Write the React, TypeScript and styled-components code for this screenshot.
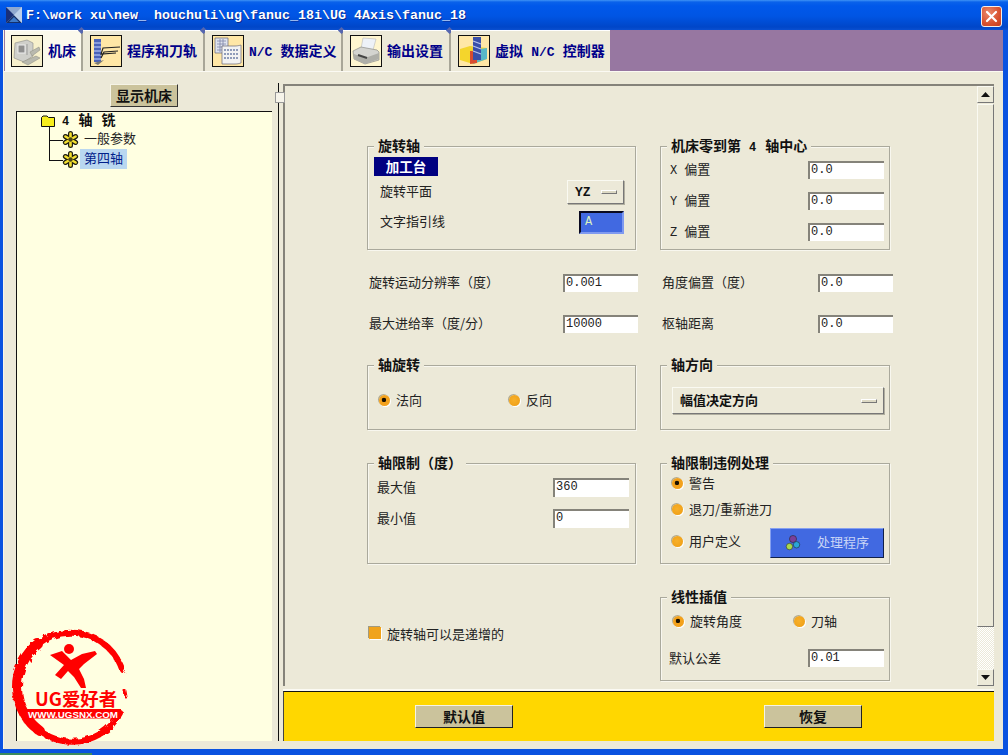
import React from "react";
import styled, { createGlobalStyle } from "styled-components";

const Global = createGlobalStyle`
  html, body { margin: 0; padding: 0; background: #ece9d8; }
  * { box-sizing: border-box; }
  #root { width: 1008px; height: 755px; overflow: hidden; }
`;

const CJK = `"Noto Sans CJK SC", "Liberation Sans", sans-serif`;
const MONO = `"Liberation Mono", "Noto Sans CJK SC", monospace`;

const Win = styled.div`
  position: relative;
  width: 1008px;
  height: 755px;
  display: flex;
  flex-direction: column;
  background: #0a52e0;
  font-family: ${CJK};
  font-size: 13px;
  color: #222;
  overflow: hidden;
`;
const TitleBar = styled.div`
  height: 30px;
  flex: none;
  display: flex;
  align-items: center;
  padding: 0 6px 0 6px;
  background: linear-gradient(#3f93f5 0, #0a62ea 2px, #0058ea 6px, #0055e4 16px, #0046c8 27px, #0a4fd0 30px);
`;
const TitleText = styled.div`
  flex: 1;
  margin-left: 4px;
  color: #fff;
  font: bold 13.33px ${MONO};
  text-shadow: 1px 1px 0 #0a2a90;
  white-space: pre;
`;
const CloseBtn = styled.div`
  width: 21px;
  height: 21px;
  margin-top: 2px;
  border: 1px solid #f5ede8;
  border-radius: 3px;
  background: radial-gradient(circle at 35% 30%, #ea8a6c, #d8512f 60%, #c23c1d);
  display: flex;
  align-items: center;
  justify-content: center;
`;
const Frame = styled.div`
  flex: 1;
  display: flex;
  flex-direction: column;
  margin: 0 5px 0 3px;
  min-height: 0;
  background: #ece9d8;
  border-left: 1px solid #f7f5ea;
`;
const TabStrip = styled.div`
  height: 42px;
  flex: none;
  display: flex;
  background: #9777a1;
  padding-left: 1px;
  border-bottom: 1px solid #fbfaf3;
  position: relative;
`;
const Tab = styled.div<{ $w: number; $active?: boolean; $last?: boolean }>`
  position: relative;
  width: ${(p) => p.$w}px;
  display: flex;
  align-items: center;
  gap: 5px;
  padding-left: ${(p) => (p.$active ? 6 : 7)}px;
  background: ${(p) => (p.$active ? "#fbf9ec" : "#ece9d8")};
  border-top: 1px solid #fff;
  border-right: ${(p) => (p.$last ? "none" : "2px solid #a8a698")};
  font-weight: 700;
  font-size: 14px;
  word-spacing: 5px;
  color: #00008a;
  white-space: pre;
  &::after {
    content: "";
    display: ${(p) => (p.$last ? "none" : "block")};
    position: absolute;
    top: -3px;
    right: -3px;
    width: 5px;
    height: 5px;
    transform: rotate(45deg);
    background: #5566b0;
  }
`;
const TabLabel = styled.span`
  margin-bottom: 2px;
`;
const TabIconBox = styled.div<{ $bg?: string }>`
  width: 32px;
  height: 32px;
  flex: none;
  border: 1px solid #111;
  background: ${(p) => p.$bg || "#ffe7a6"};
`;
const TabMono = styled.span`
  font: bold 13px ${MONO};
`;
const Panes = styled.div`
  flex: 1;
  display: flex;
  min-height: 0;
`;
const LeftPane = styled.div`
  width: 274px;
  flex: none;
  display: flex;
  flex-direction: column;
  align-items: flex-start;
  padding: 12px 0 8px 12px;
`;
const ShowBtn = styled.div`
  width: 68px;
  height: 23px;
  margin-left: 94px;
  background: #cbc39c;
  border: 1px solid;
  border-color: #f5f3e6 #333 #333 #f5f3e6;
  display: flex;
  align-items: center;
  justify-content: center;
  font-weight: 700;
  font-size: 14px;
  color: #111;
`;
const Tree = styled.div`
  margin-top: 4px;
  flex: 1;
  width: 256px;
  background: #ffffe1;
  border-top: 1px solid #111;
  border-left: 1px solid #111;
`;
const TreeRoot = styled.div`
  height: 17px;
  display: flex;
  align-items: center;
  padding-left: 24px;
  gap: 7px;
  font-weight: 700;
  font-size: 14px;
  word-spacing: 6px;
  color: #111;
  white-space: pre;
`;
const TreeRootLabel = styled.span`
  margin-bottom: 3px;
`;
const TreeChild = styled.div<{ $reach: number }>`
  position: relative;
  height: 20px;
  display: flex;
  align-items: center;
  padding-left: 45px;
  &::before {
    content: "";
    position: absolute;
    left: 32px;
    top: ${(p) => 10 - p.$reach}px;
    width: 13px;
    height: ${(p) => p.$reach + 1}px;
    border-left: 1px solid #111;
    border-bottom: 1px solid #111;
  }
`;
const TreeLabel = styled.span<{ $selected?: boolean }>`
  margin-left: 1px;
  padding: 0 4px;
  height: 20px;
  line-height: 18px;
  background: ${(p) => (p.$selected ? "#b9d7f0" : "transparent")};
  color: ${(p) => (p.$selected ? "#00208a" : "#222")};
`;
const Splitter = styled.div`
  position: relative;
  width: 1px;
  flex: none;
  margin: 11px 0 8px;
  background: #111;
  &::after {
    content: "";
    position: absolute;
    left: -3px;
    top: 9px;
    width: 8px;
    height: 9px;
    background: #f6f4ea;
    border: 1px solid #999;
  }
`;
const RightPane = styled.div`
  flex: 1;
  display: flex;
  flex-direction: column;
  padding: 12px 9px 8px 4px;
  min-width: 0;
`;
const FormWrap = styled.div`
  height: 602px;
  flex: none;
  display: flex;
  border-top: 2px solid #85837a;
  border-left: 2px solid #85837a;
`;
const FormBody = styled.div`
  flex: 1;
  padding: 60px 0 0 82px;
  overflow: hidden;
`;
const Row = styled.div<{ $top: number; $cols?: string; $h?: number }>`
  display: grid;
  grid-template-columns: ${(p) => p.$cols || "269px 230px"};
  grid-template-rows: minmax(0, 1fr);
  column-gap: ${(p) => (p.$cols ? 22 : 24)}px;
  margin-top: ${(p) => p.$top}px;
  height: ${(p) => p.$h}px;
`;
const Group = styled.div<{ $pad: string; $gap?: number }>`
  position: relative;
  display: flex;
  flex-direction: column;
  gap: ${(p) => p.$gap || 0}px;
  padding: ${(p) => p.$pad};
  border: 1px solid #aaa99c;
  box-shadow: inset 1px 1px 0 #f8f7ef, 1px 1px 0 #f8f7ef;
`;
const GroupTitle = styled.div`
  position: absolute;
  left: 6px;
  top: -11px;
  height: 18px;
  line-height: 18px;
  padding: 0 4px;
  background: #ece9d8;
  font-weight: 700;
  font-size: 14px;
  color: #111;
  white-space: pre;
`;
const Badge = styled.div`
  width: 64px;
  height: 19px;
  background: #000080;
  color: #fff;
  font-weight: 700;
  font-size: 13.5px;
  line-height: 18px;
  text-align: center;
`;
const Line = styled.div<{ $h: number; $mt?: number; $pl?: number; $ml?: number }>`
  display: flex;
  align-items: center;
  justify-content: space-between;
  height: ${(p) => p.$h}px;
  margin-top: ${(p) => p.$mt || 0}px;
  margin-left: ${(p) => p.$ml || 0}px;
  padding-left: ${(p) => p.$pl || 0}px;
  white-space: pre;
`;
const Label = styled.span<{ $lift?: number }>`
  margin-bottom: ${(p) => p.$lift ?? 2}px;
  white-space: pre;
`;
const Mono = styled.span<{ $l?: number; $r?: number }>`
  font-family: ${MONO};
  font-size: 12px;
  margin-left: ${(p) => p.$l || 0}px;
  margin-right: ${(p) => p.$r || 0}px;
`;
const Input = styled.div<{ $w?: number; $h?: number }>`
  width: ${(p) => p.$w || 76}px;
  height: ${(p) => p.$h || 18}px;
  flex: none;
  background: #fff;
  border-top: 2px solid #85837a;
  border-left: 2px solid #85837a;
  padding-left: 1px;
  font: 12px/15px ${MONO};
  color: #222;
`;
const BlueInput = styled.div`
  width: 45px;
  height: 23px;
  background: #4169e1;
  border: 2px solid;
  border-color: #0a0a20 #7f9af0 #7f9af0 #0a0a20;
  padding-left: 4px;
  color: #d8f0c0;
  font: 12px/19px ${MONO};
`;
const OptionBtn = styled.div`
  width: 57px;
  height: 24px;
  background: #ece9d8;
  border: 1px solid;
  border-color: #fafaf2 #777 #777 #fafaf2;
  box-shadow: 1px 1px 0 #b0ae9f;
  display: flex;
  align-items: center;
  justify-content: space-between;
  padding: 0 6px 0 7px;
  font: bold 13px ${MONO};
  color: #111;
`;
const Dash = styled.span`
  width: 16px;
  height: 4px;
  background: #ddd9c4;
  border: 1px solid;
  border-color: #fff #777 #777 #fff;
`;
const Dropdown = styled(OptionBtn)`
  width: 212px;
  height: 27px;
  padding: 0 6px 0 7px;
  font: bold 13px ${CJK};
`;
const Radios = styled.div<{ $cols: string; $pt?: number }>`
  display: grid;
  grid-template-columns: ${(p) => p.$cols};
  align-items: center;
  height: 18px;
  margin-top: ${(p) => p.$pt || 0}px;
`;
const RadioOpt = styled.div<{ $mb?: number }>`
  display: flex;
  align-items: center;
  gap: 6px;
  margin-bottom: ${(p) => p.$mb || 0}px;
  white-space: pre;
`;
const RadioDot = styled.span<{ $on?: boolean }>`
  width: 11px;
  height: 11px;
  flex: none;
  border-radius: 50%;
  background: radial-gradient(circle at 45% 45%, ${(p) => (p.$on ? "#1a1000 0, #1a1000 22%, #f3a11b 30%, #f3a11b 100%" : "#f7b02a, #ee9c12")});
  box-shadow: -1px -1px 0 #b4ac90, 1px 1px 0 #fff;
`;
const BlueBtn = styled.div`
  width: 114px;
  height: 30px;
  background: #4169e1;
  border: 1px solid;
  border-color: #86a0f0 #10204a #10204a #86a0f0;
  display: flex;
  align-items: center;
  gap: 16px;
  padding-left: 14px;
  color: #c8d4f6;
  font-size: 13px;
`;
const FieldSide = styled.div`
  display: flex;
  align-items: center;
  justify-content: space-between;
  padding-left: 2px;
  white-space: pre;
`;
const CheckRow = styled.div`
  display: flex;
  align-items: center;
  gap: 6px;
  height: 14px;
  margin: 29px 0 0 2px;
`;
const CheckBox = styled.span`
  width: 12px;
  height: 12px;
  background: #f0a31c;
  box-shadow: -1px -1px 0 #a09a80, 1px 1px 0 #fff;
`;
const ScrollBar = styled.div`
  width: 17px;
  flex: none;
  display: flex;
  flex-direction: column;
`;
const ScrollBtn = styled.div`
  height: 17px;
  flex: none;
  background: #ece9d8;
  border: 1px solid;
  border-color: #fafaf2 #777 #777 #fafaf2;
  display: flex;
  align-items: center;
  justify-content: center;
`;
const Thumb = styled.div`
  height: 523px;
  flex: none;
  margin-top: 1px;
  background: #ece9d8;
  border: 1px solid;
  border-color: #fafaf2 #777 #777 #fafaf2;
`;
const Track = styled.div`
  flex: 1;
  background: repeating-conic-gradient(#ece9d8 0 25%, #fff 0 50%) 0 0 / 2px 2px;
`;
const ActionBar = styled.div`
  margin-top: 5px;
  flex: 1;
  background: #ffd700;
  border-top: 1px solid #111;
  border-left: 1px solid #444;
  box-shadow: 0 -2px 0 #fbfaf3;
  display: flex;
  justify-content: space-between;
  padding: 13px 132px 0 131px;
`;
const ActionBtn = styled.div`
  width: 98px;
  height: 23px;
  background: #cbc39c;
  border: 1px solid;
  border-color: #f5f3e6 #222 #222 #f5f3e6;
  display: flex;
  align-items: center;
  justify-content: center;
  font-weight: 700;
  font-size: 14px;
  color: #111;
`;
const BottomEdge = styled.div`
  height: 6px;
  flex: none;
`;
const TaskStrip = styled.div`
  position: absolute;
  left: 0;
  bottom: 0;
  width: 92px;
  height: 2px;
  background: #3b8a5e;
`;
const Logo = styled.svg`
  position: absolute;
  left: 12px;
  top: 627px;
`;

const Gear = () => (
  <svg width="17" height="17" viewBox="0 0 17 17" style={{ flex: "none" }}>
    <g stroke="#1d1d10" strokeWidth="5" strokeLinecap="round">
      <path d="M8.5 2.6v11.8M3.4 5.5l10.2 6M13.6 5.5l-10.2 6" />
    </g>
    <g stroke="#f4e030" strokeWidth="2.6" strokeLinecap="round">
      <path d="M8.5 2.6v11.8M3.4 5.5l10.2 6M13.6 5.5l-10.2 6" />
    </g>
    <circle cx="8.5" cy="8.5" r="2.2" fill="#4a4614" />
  </svg>
);
const Folder = () => (
  <svg width="14" height="12" viewBox="0 0 14 12" style={{ flex: "none" }}>
    <path d="M.5 2.5 2 1h4l1.5 1.5h6v9H.5z" fill="#f7ee1c" stroke="#111" />
  </svg>
);
const WinIcon = () => (
  <svg width="16" height="16" viewBox="0 0 16 16" style={{ flex: "none" }}>
    <rect width="16" height="16" fill="#9fb4d8" />
    <path d="M0 0h16L8 8z" fill="#8fa8d0" />
    <path d="M0 0l8 8-8 8z" fill="#1a2f78" />
    <path d="M0 16h16L8 8z" fill="#16306a" />
    <path d="M16 0 8 8l8 8z" fill="#bcd0ea" />
    <path d="M3 15 8 10l5 5z" fill="#3d79c8" />
  </svg>
);
const Tri = ({ down }: { down?: boolean }) => (
  <svg width="9" height="5" viewBox="0 0 9 5">
    <path d={down ? "M0 0h9L4.5 5z" : "M0 5h9L4.5 0z"} fill="#111" />
  </svg>
);
const MachineIcon = () => (
  <svg width="30" height="30" viewBox="0 0 30 30" style={{ display: "block" }}>
    <rect width="30" height="30" fill="#f7f0cc" />
    <path d="M2 22 3 7l12-3 6 3v13l-9 6z" fill="#cfcfca" stroke="#8a8a86" strokeWidth=".6" />
    <rect x="6" y="9" width="7" height="8" fill="#8f8f8f" stroke="#eee" />
    <path d="M15 8v11" stroke="#999" />
    <path d="M18 16l9-5 1 3-8 6zM10 26l14-6 4 2-12 7z" fill="#b9b9ae" stroke="#8a8a7e" strokeWidth=".5" />
  </svg>
);
const PathIcon = () => (
  <svg width="30" height="30" viewBox="0 0 30 30" style={{ display: "block" }}>
    <rect x="3" y="3" width="7" height="23" fill="#4a62b8" />
    <path d="M3 7h7M3 11h7M3 15h7M3 19h7M3 23h7" stroke="#9fb0e8" strokeWidth="1.4" />
    <path d="M29 11 12 12l-2 6 15-1M27 15l-14 1-3 6" fill="none" stroke="#222" strokeWidth="1.2" />
    <path d="M3 27l10-3-6 5z" fill="#777" />
  </svg>
);
const SheetIcon = () => (
  <svg width="30" height="30" viewBox="0 0 30 30" style={{ display: "block" }}>
    <path d="M2 2h13v15H2z" fill="#dfe3ee" stroke="#667" strokeWidth=".7" />
    <path d="M4 5h9M4 8h9M4 11h9M4 14h9M7 3v13M10 3v13" stroke="#7d86a8" strokeWidth=".8" />
    <path d="M9 10h13c3 0 6-1 6-1v18s-3 1-6 1H9z" fill="#f2f2f2" stroke="#667" strokeWidth=".7" />
    <path d="M11 14h15M11 18h15M11 22h15" stroke="#6f7fa6" strokeWidth="1.4" strokeDasharray="2 1" />
  </svg>
);
const PrinterIcon = () => (
  <svg width="30" height="30" viewBox="0 0 30 30" style={{ display: "block" }}>
    <rect width="30" height="30" fill="#fff6d0" />
    <path d="M12 2 25 3l-3 11-12-1z" fill="#eef2f8" stroke="#bbb" strokeWidth=".6" />
    <path d="M2 15 10 11l16 3 2 2v8l-14 4-11-5z" fill="#d4d4d0" stroke="#8e8e88" strokeWidth=".7" />
    <path d="M3 18l11 4 14-5v6l-14 5-11-5z" fill="#aeaea8" />
    <path d="M7 19l9 3" stroke="#444" strokeWidth="2" />
  </svg>
);
const VncIcon = () => (
  <svg width="30" height="30" viewBox="0 0 30 30" style={{ display: "block" }}>
    <path d="M1 13l10-3 17 2v11L14 28 1 24z" fill="#f4d52c" />
    <path d="M14 14l14-2v11l-14 5z" fill="#58b8c8" />
    <path d="M11 15h7v12l-7 1z" fill="#d84c30" />
    <rect x="14" y="1" width="8" height="23" fill="#3a4fa8" />
    <path d="M14 5l8 3M14 10l8 3M14 15l8 3" stroke="#b8c4ee" strokeWidth="1.3" />
  </svg>
);
const ClusterIcon = () => (
  <svg width="16" height="16" viewBox="0 0 16 18" style={{ flex: "none" }}>
    <circle cx="8" cy="4.5" r="4" fill="#7a3f9a" stroke="#222" strokeWidth=".6" />
    <circle cx="4" cy="13" r="3.6" fill="#a9d94c" stroke="#222" strokeWidth=".6" />
    <circle cx="12" cy="11" r="3.6" fill="#2aa5d8" stroke="#222" strokeWidth=".6" />
  </svg>
);

function Radio({ on, lift, children }: { on?: boolean; lift?: number; children: React.ReactNode }) {
  return (
    <RadioOpt $mb={lift}>
      <RadioDot $on={on} />
      <Label>{children}</Label>
    </RadioOpt>
  );
}

export default function App() {
  return (
    <Win>
      <Global />
      <TitleBar>
        <WinIcon />
        <TitleText>{"F:\\work xu\\new_ houchuli\\ug\\fanuc_18i\\UG 4Axis\\fanuc_18"}</TitleText>
        <CloseBtn>
          <svg width="13" height="13" viewBox="0 0 13 13">
            <path d="M2 2l9 9M11 2l-9 9" stroke="#fff" strokeWidth="2.2" strokeLinecap="round" />
          </svg>
        </CloseBtn>
      </TitleBar>
      <Frame>
        <TabStrip>
          <Tab $w={78} $active>
            <TabIconBox><MachineIcon /></TabIconBox>
            <TabLabel>机床</TabLabel>
          </Tab>
          <Tab $w={122}>
            <TabIconBox><PathIcon /></TabIconBox>
            <TabLabel>程序和刀轨</TabLabel>
          </Tab>
          <Tab $w={138}>
            <TabIconBox><SheetIcon /></TabIconBox>
            <TabLabel><TabMono>N/C</TabMono> 数据定义</TabLabel>
          </Tab>
          <Tab $w={108}>
            <TabIconBox $bg="#fff6d0"><PrinterIcon /></TabIconBox>
            <TabLabel>输出设置</TabLabel>
          </Tab>
          <Tab $w={159} $last>
            <TabIconBox><VncIcon /></TabIconBox>
            <TabLabel>虚拟 <TabMono>N/C</TabMono> 控制器</TabLabel>
          </Tab>
        </TabStrip>
        <Panes>
          <LeftPane>
            <ShowBtn><Label>显示机床</Label></ShowBtn>
            <Tree>
              <TreeRoot>
                <Folder />
                <TreeRootLabel><Mono>4</Mono> 轴 铣</TreeRootLabel>
              </TreeRoot>
              <TreeChild $reach={12}>
                <Gear />
                <TreeLabel>一般参数</TreeLabel>
              </TreeChild>
              <TreeChild $reach={20}>
                <Gear />
                <TreeLabel $selected>第四轴</TreeLabel>
              </TreeChild>
            </Tree>
          </LeftPane>
          <Splitter />
          <RightPane>
            <FormWrap>
              <FormBody>
                <Row $top={0} $h={104}>
                  <Group $pad="10px 11px 0 6px">
                    <GroupTitle>旋转轴</GroupTitle>
                    <Badge>加工台</Badge>
                    <Line $h={24} $mt={4} $pl={6}>
                      <Label $lift={4}>旋转平面</Label>
                      <OptionBtn>YZ<Dash /></OptionBtn>
                    </Line>
                    <Line $h={23} $mt={7} $pl={6}>
                      <Label $lift={4}>文字指引线</Label>
                      <BlueInput>A</BlueInput>
                    </Line>
                  </Group>
                  <Group $pad="14px 5px 0 9px" $gap={13}>
                    <GroupTitle>机床零到第<Mono $l={8} $r={9}>4</Mono>轴中心</GroupTitle>
                    <Line $h={18}><Label $lift={4}><Mono $r={7}>X</Mono>偏置</Label><Input>0.0</Input></Line>
                    <Line $h={18}><Label $lift={4}><Mono $r={7}>Y</Mono>偏置</Label><Input>0.0</Input></Line>
                    <Line $h={18}><Label $lift={4}><Mono $r={7}>Z</Mono>偏置</Label><Input>0.0</Input></Line>
                  </Group>
                </Row>
                <Row $top={24} $h={18} $cols="271px 233px">
                  <FieldSide><Label $lift={3}>旋转运动分辨率（度）</Label><Input $w={75}>0.001</Input></FieldSide>
                  <FieldSide><Label $lift={3}>角度偏置（度）</Label><Input $w={75}>0.0</Input></FieldSide>
                </Row>
                <Row $top={23} $h={18} $cols="271px 233px">
                  <FieldSide><Label $lift={3}>最大进给率（度/分）</Label><Input $w={75}>10000</Input></FieldSide>
                  <FieldSide><Label $lift={3}>枢轴距离</Label><Input $w={75}>0.0</Input></FieldSide>
                </Row>
                <Row $top={32} $h={65}>
                  <Group $pad="0 0 0 11px">
                    <GroupTitle>轴旋转</GroupTitle>
                    <Radios $cols="130px 1fr" $pt={24}>
                      <Radio on lift={1}>法向</Radio>
                      <Radio lift={1}>反向</Radio>
                    </Radios>
                  </Group>
                  <Group $pad="21px 5px 0 11px">
                    <GroupTitle>轴方向</GroupTitle>
                    <Dropdown><Label>幅值决定方向</Label><Dash /></Dropdown>
                  </Group>
                </Row>
                <Row $top={33} $h={101}>
                  <Group $pad="14px 6px 0 9px" $gap={12}>
                    <GroupTitle>轴限制（度）</GroupTitle>
                    <Line $h={19}><Label>最大值</Label><Input $h={19}>360</Input></Line>
                    <Line $h={19}><Label>最小值</Label><Input $h={19}>0</Input></Line>
                  </Group>
                  <Group $pad="9px 5px 0 11px">
                    <GroupTitle>轴限制违例处理</GroupTitle>
                    <Line $h={20}><Radio on>警告</Radio></Line>
                    <Line $h={20} $mt={6}><Radio>退刀/重新进刀</Radio></Line>
                    <Line $h={30} $mt={9}>
                      <Radio lift={4}>用户定义</Radio>
                      <BlueBtn><ClusterIcon /><Label $lift={3}>处理程序</Label></BlueBtn>
                    </Line>
                  </Group>
                </Row>
                <Row $top={33} $h={84}>
                  <CheckRow>
                    <CheckBox />
                    旋转轴可以是递增的
                  </CheckRow>
                  <Group $pad="13px 5px 0 12px">
                    <GroupTitle>线性插值</GroupTitle>
                    <Radios $cols="121px 1fr">
                      <Radio on lift={1}>旋转角度</Radio>
                      <Radio lift={1}>刀轴</Radio>
                    </Radios>
                    <Line $h={18} $mt={20} $ml={-4}><Label>默认公差</Label><Input>0.01</Input></Line>
                  </Group>
                </Row>
              </FormBody>
              <ScrollBar>
                <ScrollBtn><Tri /></ScrollBtn>
                <Thumb />
                <Track />
                <ScrollBtn><Tri down /></ScrollBtn>
              </ScrollBar>
            </FormWrap>
            <ActionBar>
              <ActionBtn><Label>默认值</Label></ActionBtn>
              <ActionBtn><Label>恢复</Label></ActionBtn>
            </ActionBar>
          </RightPane>
        </Panes>
      </Frame>
      <BottomEdge />
      <TaskStrip />
      <Logo width="118" height="120" viewBox="0 0 118 120">
        <defs>
          <filter id="rough" x="-10%" y="-10%" width="120%" height="120%">
            <feTurbulence type="fractalNoise" baseFrequency="0.18" numOctaves="2" seed="4" />
            <feDisplacementMap in="SourceGraphic" scale="5" />
          </filter>
        </defs>
        <g fill="none" stroke="#f00" strokeLinecap="round" filter="url(#rough)">
          <path d="M108 86A54 54 0 0 1 28 104" strokeWidth="6" strokeDasharray="28 2 40 1" />
          <path d="M28 104A54 54 0 0 1 26 17" strokeWidth="10" />
          <path d="M26 17A54 54 0 0 1 110 42" strokeWidth="6" strokeDasharray="34 2 22 3 30 2" />
          <path d="M113 64l1 6" strokeWidth="3" />
        </g>
        <circle cx="57" cy="22" r="5" fill="#f00" />
        <path d="M38 28 50 24 59 33 70 27 83 24 85 27 72 37 67 42 72 52 74 61 69 61 62 50 56 44 49 52 43 48 52 38z" fill="#f00" />
        <text x="23" y="79" fill="#f00" fontFamily={CJK} fontWeight="700" fontSize="18" textLength="82" lengthAdjust="spacingAndGlyphs">
          UG爱好者
        </text>
        <rect x="15" y="82" width="94" height="9.5" fill="#f00" />
        <text x="16" y="90.5" fill="#fff" fontFamily='"Liberation Sans", sans-serif' fontWeight="700" fontSize="9.5" textLength="90" lengthAdjust="spacingAndGlyphs">
          WWW.UGSNX.COM
        </text>
      </Logo>
    </Win>
  );
}
